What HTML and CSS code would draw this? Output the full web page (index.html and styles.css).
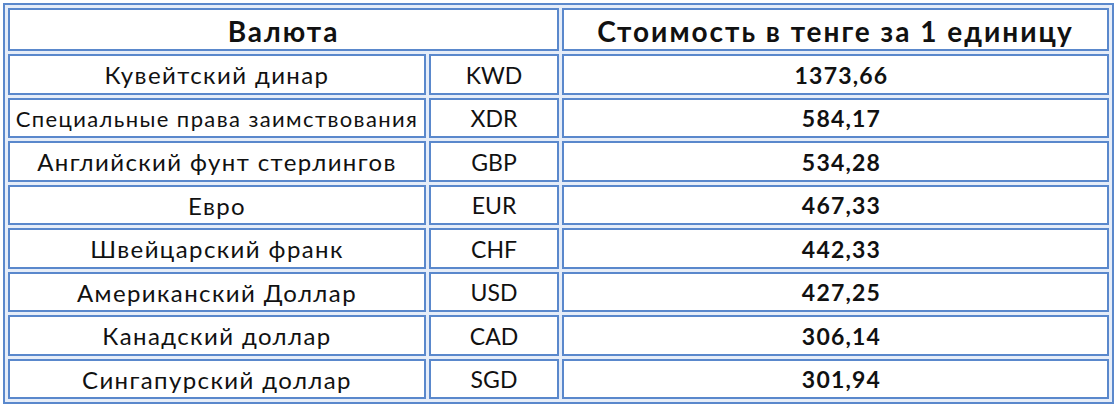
FILE: index.html
```html
<!DOCTYPE html>
<html lang="ru">
<head>
<meta charset="utf-8">
<link rel="stylesheet" href="styles.css">
</head>
<body>
<table class="rates">
  <tr class="head">
    <th colspan="2">Валюта</th>
    <th>Стоимость в тенге за 1 единицу</th>
  </tr>
  <tr><td class="name">Кувейтский динар</td><td class="code">KWD</td><td class="val">1373,66</td></tr>
  <tr><td class="name small">Специальные права заимствования</td><td class="code">XDR</td><td class="val">584,17</td></tr>
  <tr><td class="name">Английский фунт стерлингов</td><td class="code">GBP</td><td class="val">534,28</td></tr>
  <tr><td class="name">Евро</td><td class="code">EUR</td><td class="val">467,33</td></tr>
  <tr><td class="name">Швейцарский франк</td><td class="code">CHF</td><td class="val">442,33</td></tr>
  <tr><td class="name">Американский Доллар</td><td class="code">USD</td><td class="val">427,25</td></tr>
  <tr><td class="name">Канадский доллар</td><td class="code">CAD</td><td class="val">306,14</td></tr>
  <tr><td class="name">Сингапурский доллар</td><td class="code">SGD</td><td class="val">301,94</td></tr>
</table>
</body>
</html>
```
FILE: styles.css
```css
html, body {
  margin: 0;
  padding: 0;
  background: #ffffff;
}
body {
  padding: 3px;
  font-family: Lato, "Open Sans", sans-serif;
  color: #111111;
}
.rates {
  width: 1111px;
  border: 2px solid #5a88cc;
  border-spacing: 3px;
  border-collapse: separate;
  background: #e6edf8;
}
.rates th,
.rates td {
  box-sizing: border-box;
  border: 2px solid #5a88cc;
  background: #ffffff;
  text-align: center;
  padding: 0;
  line-height: 1;
  white-space: nowrap;
}
.rates th {
  height: 43px;
  font-weight: 700;
  font-size: 28px;
  letter-spacing: 2px;
  padding-top: 2px;
}
.rates td {
  height: 40.5px;
  font-size: 24px;
  letter-spacing: 1.4px;
  padding-top: 2px;
}
.rates td.name {
  width: 418px;
}
.rates td.small {
  font-size: 22px;
}
.rates td.code {
  width: 130px;
  font-size: 23px;
  letter-spacing: 0;
}
.rates td.val {
  font-weight: 700;
  font-size: 23px;
  letter-spacing: 1.2px;
  padding-left: 12px;
}
```
